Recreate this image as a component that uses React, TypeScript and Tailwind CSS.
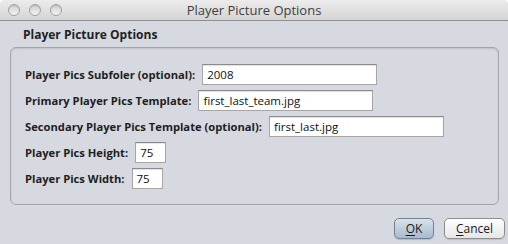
const rows = [
  { label: "Player Pics Subfoler (optional):", value: "2008", width: "w-[175px]" },
  { label: "Primary Player Pics Template:", value: "first_last_team.jpg", width: "w-[175px]" },
  { label: "Secondary Player Pics Template (optional):", value: "first_last.jpg", width: "w-[175px]" },
  { label: "Player Pics Height:", value: "75", width: "w-[31px]" },
  { label: "Player Pics Width:", value: "75", width: "w-[31px]" },
];

function Light() {
  return (
    <span className="block w-[12px] h-[12px] rounded-full border border-[#a0a0a0] bg-gradient-to-b from-[#cfcfcf] to-[#f4f4f4] shadow-[inset_0_1px_1px_rgba(0,0,0,0.12)]" />
  );
}

export default function App() {
  return (
    <div className="w-[508px] h-[244px] bg-white font-['Open_Sans',sans-serif] text-[#1a1a1a]">
      <div className="flex flex-col h-full rounded-t-[5px] overflow-hidden bg-[#d6d9e0]">
        {/* title bar */}
        <div className="h-[21px] shrink-0 grid grid-cols-[80px_1fr_80px] items-center border-b border-[#8f8f8f] bg-gradient-to-b from-[#ececec] to-[#d4d4d4]">
          <div className="flex items-center gap-[9px] pl-[8px]">
            <Light />
            <Light />
            <Light />
          </div>
          <div className="text-center text-[13px] leading-[20px] text-[#404040]">
            Player Picture Options
          </div>
          <div />
        </div>

        <div className="pl-[23px] pt-[6px] text-[12px] leading-[16px] font-bold text-[#222]">
          Player Picture Options
        </div>

        {/* group box */}
        <div className="mt-[4px] ml-[10px] mr-[9px] h-[158px] rounded-[6px] border border-[#a2a5ac] shadow-[inset_0_1px_2px_rgba(0,0,0,0.12)] pt-[16px] pl-[14px] flex flex-col gap-[5px]">
          {rows.map((r) => (
            <div key={r.label} className="flex items-center gap-[7px]">
              <span className="text-[11.2px] leading-[21px] font-bold text-[#1e1e1e] whitespace-nowrap">
                {r.label}
              </span>
              <div
                className={`${r.width} h-[21px] bg-white border border-[#a6a6a6] border-t-[#8a8a8a] shadow-[inset_0_1px_1px_rgba(0,0,0,0.12)] pl-[4px] text-[11.5px] leading-[19px] text-[#111]`}
              >
                {r.value}
              </div>
            </div>
          ))}
        </div>

        {/* buttons */}
        <div className="mt-[13px] flex justify-end gap-[10px] pr-[3px]">
          <button className="w-[40px] h-[21px] rounded-[5px] border border-[#6f8296] bg-gradient-to-b from-[#d9e3ed] to-[#a7b9cc] text-[12px] leading-[19px] text-[#1a1a1a] shadow-[0_1px_1px_rgba(0,0,0,0.15)]">
            <span className="underline underline-offset-[2px]">O</span>K
          </button>
          <button className="w-[61px] h-[21px] rounded-[5px] border border-[#8e8e8e] bg-gradient-to-b from-[#ffffff] to-[#e6e6e6] text-[12px] leading-[19px] text-[#1a1a1a] shadow-[0_1px_1px_rgba(0,0,0,0.12)]">
            <span className="underline underline-offset-[2px]">C</span>ancel
          </button>
        </div>
      </div>
    </div>
  );
}
